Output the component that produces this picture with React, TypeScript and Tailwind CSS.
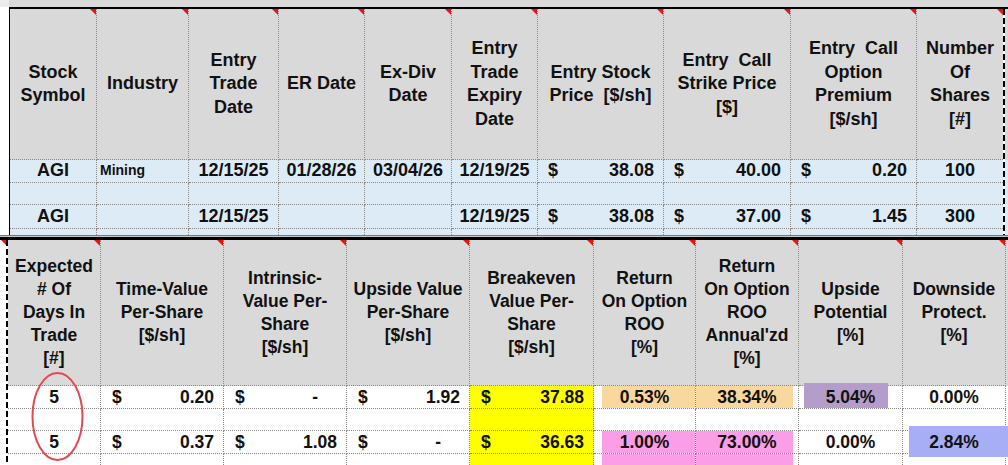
import React from "react";

type Kind = "c" | "l" | "acc" | "e";
interface D {
  k: Kind;
  v?: string;
  bg?: string;
  ov?: React.ReactNode;
}

const Tri = () => (
  <span className="absolute top-0 right-0 w-[6px] h-[6px] bg-[#ee1111] [clip-path:polygon(0_0,100%_0,100%_100%)]" />
);

const topHeaders: string[][] = [
  ["Stock", "Symbol"],
  ["Industry"],
  ["Entry", "Trade", "Date"],
  ["ER Date"],
  ["Ex-Div", "Date"],
  ["Entry", "Trade", "Expiry", "Date"],
  ["Entry Stock", "Price  [$/sh]"],
  ["Entry  Call", "Strike Price", "[$]"],
  ["Entry  Call", "Option", "Premium", "[$/sh]"],
  ["Number", "Of", "Shares", "[#]"],
];

const botHeaders: string[][] = [
  ["Expected", "# Of", "Days In", "Trade", "[#]"],
  ["Time-Value", "Per-Share", "[$/sh]"],
  ["Intrinsic-", "Value Per-", "Share", "[$/sh]"],
  ["Upside Value", "Per-Share", "[$/sh]"],
  ["Breakeven", "Value Per-", "Share", "[$/sh]"],
  ["Return", "On Option", "ROO", "[%]"],
  ["Return", "On Option", "ROO", "Annual'zd", "[%]"],
  ["Upside", "Potential", "[%]"],
  ["Downside", "Protect.", "[%]"],
];

const E: D = { k: "e" };

const topRows: D[][] = [
  [
    { k: "c", v: "AGI" },
    { k: "l", v: "Mining" },
    { k: "c", v: "12/15/25" },
    { k: "c", v: "01/28/26" },
    { k: "c", v: "03/04/26" },
    { k: "c", v: "12/19/25" },
    { k: "acc", v: "38.08" },
    { k: "acc", v: "40.00" },
    { k: "acc", v: "0.20" },
    { k: "c", v: "100" },
  ],
  [E, E, E, E, E, E, E, E, E, E],
  [
    { k: "c", v: "AGI" },
    E,
    { k: "c", v: "12/15/25" },
    E,
    E,
    { k: "c", v: "12/19/25" },
    { k: "acc", v: "38.08" },
    { k: "acc", v: "37.00" },
    { k: "acc", v: "1.45" },
    { k: "c", v: "300" },
  ],
];

const peachL = <span className="absolute left-[8px] right-0 top-0 bottom-0 bg-[#f9d89d]" />;
const peachR = <span className="absolute left-0 right-[5px] top-0 bottom-0 bg-[#f9d89d]" />;
const pinkL = <span className="absolute left-[8px] right-0 top-0 bottom-0 bg-[#fb9de7]" />;
const pinkR = <span className="absolute left-0 right-[5px] top-0 bottom-0 bg-[#fb9de7]" />;
const purple = (
  <span className="absolute left-[5px] right-[14px] top-[-3px] bottom-0 bg-[#b59dcb] z-10" />
);
const blue = (
  <span className="absolute left-[6px] right-[-4px] top-[-5px] bottom-[-4px] bg-[#a7aef6] z-10" />
);
const yellow = "bg-[#ffff00]";

const botRows: D[][] = [
  [
    { k: "c", v: "5" },
    { k: "acc", v: "0.20" },
    { k: "acc", v: "-" },
    { k: "acc", v: "1.92" },
    { k: "acc", v: "37.88", bg: yellow },
    { k: "c", v: "0.53%", ov: peachL },
    { k: "c", v: "38.34%", ov: peachR },
    { k: "c", v: "5.04%", ov: purple },
    { k: "c", v: "0.00%" },
  ],
  [E, E, E, E, { k: "e", bg: yellow }, E, E, E, E],
  [
    { k: "c", v: "5" },
    { k: "acc", v: "0.37" },
    { k: "acc", v: "1.08" },
    { k: "acc", v: "-" },
    { k: "acc", v: "36.63", bg: yellow },
    { k: "c", v: "1.00%", ov: pinkL },
    { k: "c", v: "73.00%", ov: pinkR },
    { k: "c", v: "0.00%" },
    { k: "c", v: "2.84%", ov: blue },
  ],
  [E, E, E, E, { k: "e", bg: yellow }, { k: "e", ov: pinkL }, { k: "e", ov: pinkR }, E, E],
];

function DataCell({
  d,
  last,
  noBottom,
  top,
}: {
  d: D;
  last?: boolean;
  noBottom?: boolean;
  top?: boolean;
}) {
  const borders = `${last ? "" : "border-r"} ${noBottom ? "" : "border-b"} border-dotted border-[#8a8a8a]`;
  const bg = d.bg ?? (top ? "bg-[#ddebf7]" : "bg-white");
  let inner: React.ReactNode = null;
  if (d.k === "c") {
    inner = <span className="relative z-20 w-full text-center">{d.v}</span>;
  } else if (d.k === "l") {
    inner = (
      <span className="relative z-20 w-full pl-[3px] text-left text-[14px]">{d.v}</span>
    );
  } else if (d.k === "acc") {
    inner = (
      <span
        className={`relative z-20 w-full flex justify-between ${
          top ? "pl-[10px] pr-[9px]" : "pl-[11px] pr-[9px]"
        }`}
      >
        <span>$</span>
        <span className={d.v === "-" ? "pr-[19px]" : ""}>{d.v}</span>
      </span>
    );
  }
  return (
    <div className={`relative flex items-center overflow-visible ${bg} ${borders}`}>
      {d.ov}
      {inner}
    </div>
  );
}

function HeaderCell({ lines, last }: { lines: string[]; last?: boolean }) {
  return (
    <div
      className={`relative flex flex-col items-center justify-center text-center bg-[#d9d9d9] ${
        last ? "" : "border-r"
      } border-b border-dotted border-[#8a8a8a] whitespace-pre`}
    >
      <Tri />
      {lines.map((l, i) => (
        <div key={i}>{l}</div>
      ))}
    </div>
  );
}

export default function App() {
  return (
    <div className="relative w-[1008px] h-[465px] overflow-hidden bg-white text-[#111] font-bold [font-family:'Liberation_Sans',Arial,sans-serif]">
      {/* Top table */}
      <div className="flex h-[235px]">
        <div className="w-[9px] flex flex-col">
          <div className="h-[7px] bg-[#ececec]" />
          <div className="flex-1 bg-white" />
        </div>
        <div className="flex-1 flex flex-col">
          <div className="h-[7px] bg-[#d9d9d9]" />
          <div className="flex flex-1 border-t-2 border-l border-black">
            <div className="grid grid-cols-[87px_92px_90px_86px_87px_86px_126px_127px_126px_86px] grid-rows-[151px_23px_22px_24px_6px] text-[18px] leading-[23.5px]">
              {topHeaders.map((h, i) => (
                <HeaderCell key={i} lines={h} last={i === 9} />
              ))}
              {topRows.map((r, ri) =>
                r.map((d, ci) => (
                  <DataCell key={`${ri}-${ci}`} d={d} top last={ci === 9} />
                ))
              )}
              {Array.from({ length: 10 }).map((_, ci) => (
                <DataCell key={`p-${ci}`} d={E} top last={ci === 9} noBottom />
              ))}
            </div>
            <div className="w-[2px] bg-[repeating-linear-gradient(to_bottom,#000_0px,#000_6px,transparent_6px,transparent_9px)]" />
            <div className="w-[3px] flex flex-col">
              <div className="h-[151px] bg-[#d9d9d9]" />
              <div className="flex-1 bg-[#ddebf7]" />
            </div>
          </div>
        </div>
      </div>
      {/* separator */}
      <div className="h-[1px] bg-[#777777]" />
      <div className="h-[1px] bg-[#c8c8c8]" />
      {/* Bottom table */}
      <div className="flex h-[228px] border-t-[3px] border-black">
        <div className="relative w-[6px] bg-white">
          <span className="absolute top-0 right-0 w-[5px] h-[5px] bg-[#ee1111] [clip-path:polygon(0_0,100%_0,100%_100%)]" />
        </div>
        <div className="w-[2px] bg-[repeating-linear-gradient(to_bottom,#000_0px,#000_6px,transparent_6px,transparent_9px)]" />
        <div className="grid grid-cols-[93px_123px_123px_123px_124px_102px_103px_104px_103px] grid-rows-[146px_23px_22px_23px_11px] text-[17.5px] leading-[23px]">
          {botHeaders.map((h, i) => (
            <HeaderCell key={i} lines={h} />
          ))}
          {botRows.map((r, ri) =>
            r.map((d, ci) => (
              <DataCell key={`${ri}-${ci}`} d={d} noBottom={ri === 3} />
            ))
          )}
        </div>
        <div className="w-[2px] flex flex-col">
          <div className="h-[146px] bg-[#d9d9d9]" />
          <div className="flex-1 bg-white" />
        </div>
      </div>
      <svg
        className="absolute left-0 top-0 pointer-events-none z-30"
        width={1008}
        height={465}
      >
        <ellipse
          cx={57.5}
          cy={416.5}
          rx={25}
          ry={43.5}
          fill="none"
          stroke="#e14a4f"
          strokeWidth={2}
        />
      </svg>
    </div>
  );
}
